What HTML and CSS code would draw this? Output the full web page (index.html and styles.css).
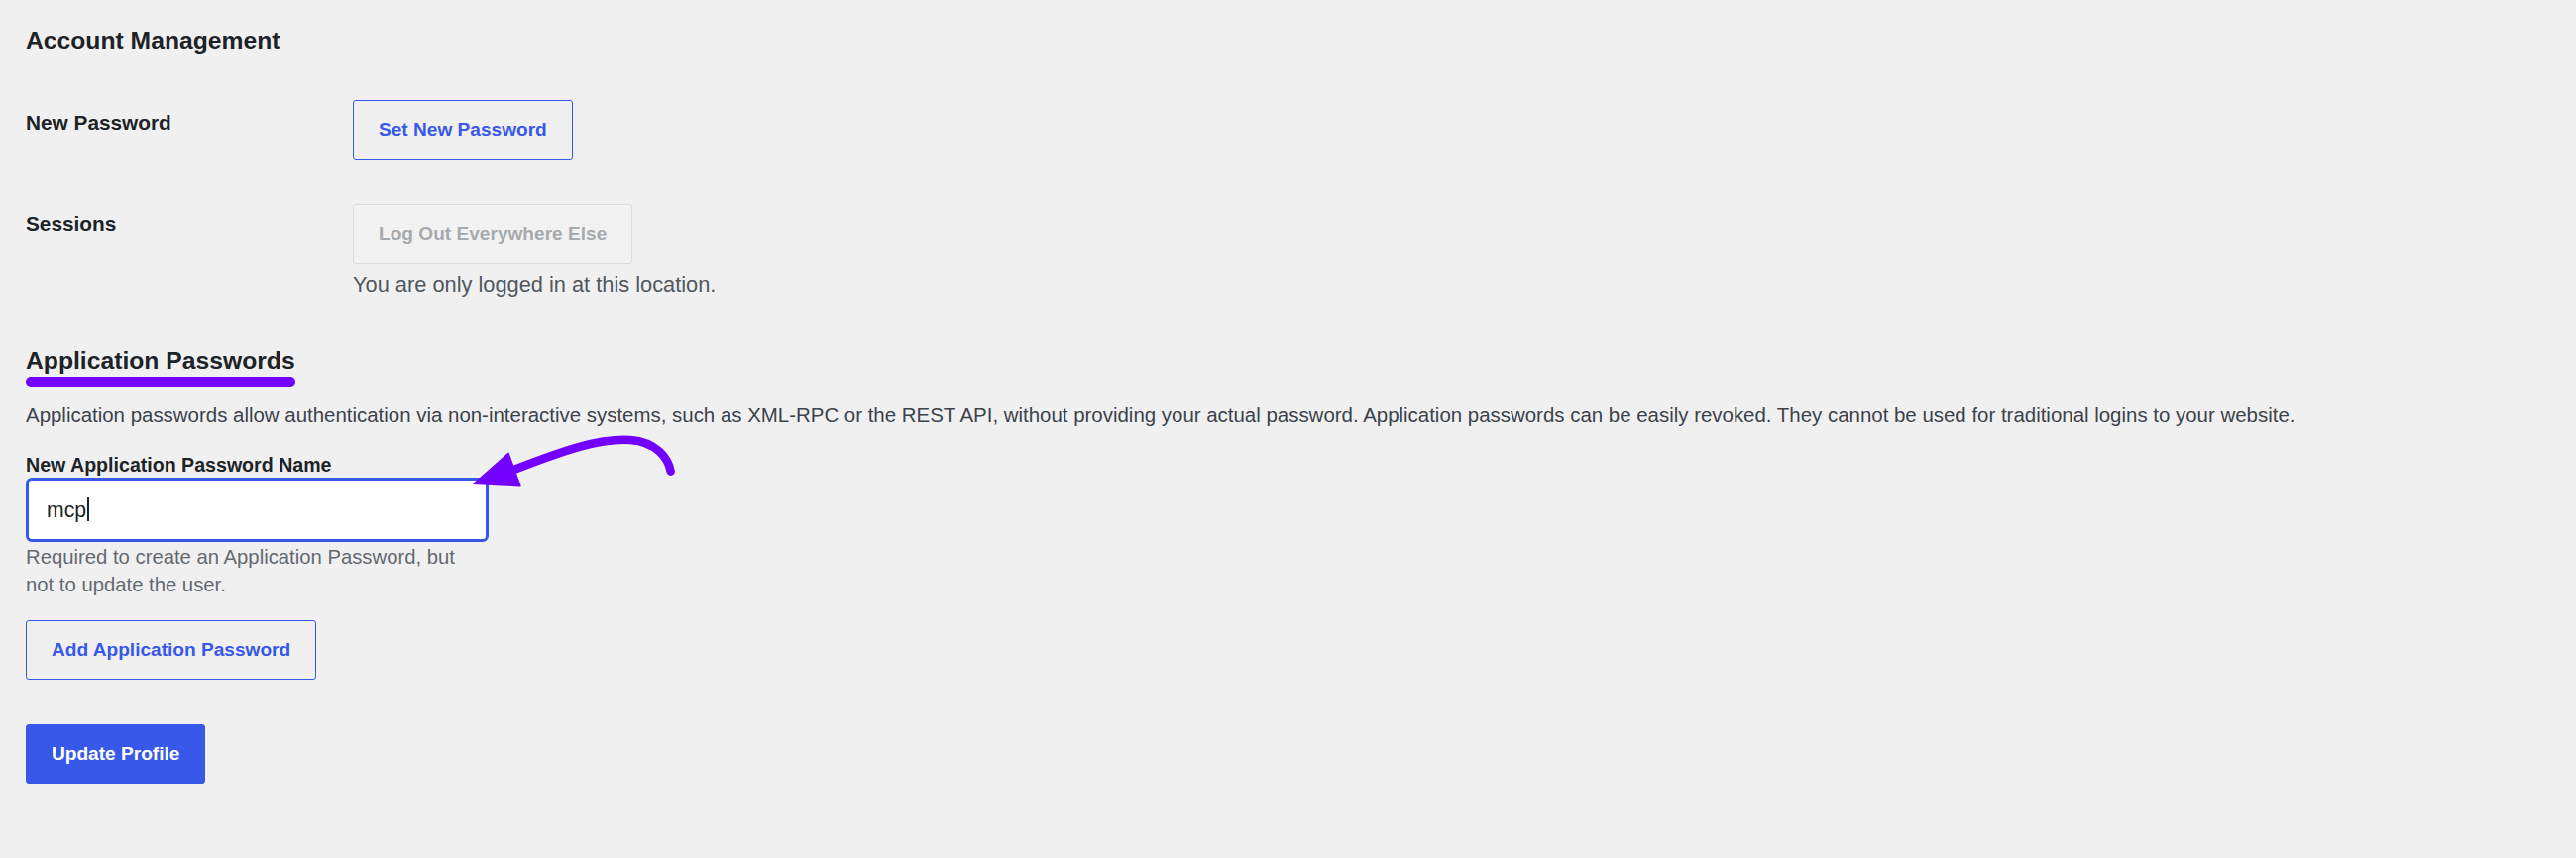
FILE: index.html
```html
<!DOCTYPE html>
<html lang="en">
<head>
<meta charset="utf-8">
<title>Profile</title>
<link rel="stylesheet" href="styles.css">
</head>
<body>
<main class="profile">
  <h2 class="section-title">Account Management</h2>

  <div class="form-table">
    <div class="form-row">
      <div class="form-label">New Password</div>
      <div class="form-field">
        <button type="button" class="btn btn-secondary">Set New Password</button>
      </div>
    </div>
    <div class="form-row form-row--stacked">
      <div class="form-label">Sessions</div>
      <div class="form-field">
        <button type="button" class="btn btn-disabled" disabled>Log Out Everywhere Else</button>
        <p class="session-note">You are only logged in at this location.</p>
      </div>
    </div>
  </div>

  <section class="app-passwords">
    <h2 class="section-title section-title--spaced"><span class="marked">Application Passwords</span></h2>
    <p class="intro">Application passwords allow authentication via non-interactive systems, such as XML-RPC or the REST API, without providing your actual password. Application passwords can be easily revoked. They cannot be used for traditional logins to your website.</p>

    <div class="field">
      <label class="field-label" for="app-name">New Application Password Name</label>
      <div class="input-wrap">
        <input class="text-input" id="app-name" type="text" value="mcp">
        <span class="input-caret" aria-hidden="true"></span>
      </div>
      <svg class="pointer-arrow" width="220" height="65" viewBox="0 0 220 65" aria-hidden="true">
        <path d="M206.7 41.7 C204 28, 192 12, 166 10 C135 8, 100 20, 46 41" fill="none" stroke="#7300ff" stroke-width="8.5" stroke-linecap="round"/>
        <polygon points="8,54.3 43,23.3 55,56.7" fill="#7300ff" stroke="#7300ff" stroke-width="1.5" stroke-linejoin="round"/>
      </svg>
      <p class="field-help">Required to create an Application Password, but not to update the user.</p>
    </div>

    <button type="button" class="btn btn-secondary btn-add">Add Application Password</button>
  </section>

  <button type="submit" class="btn btn-primary btn-submit">Update Profile</button>
</main>
</body>
</html>
```

FILE: styles.css
```css
* {
  box-sizing: border-box;
}

html,
body {
  margin: 0;
  background: #f0f0f1;
}

body {
  font-family: "Liberation Sans", Arial, sans-serif;
  color: #1d2327;
}

.profile {
  padding: 26px 26px 40px;
  display: flex;
  flex-direction: column;
  align-items: flex-start;
}

.section-title {
  margin: 0;
  font-size: 24.7px;
  line-height: 30px;
  font-weight: 700;
  color: #1d2327;
}

.section-title--spaced {
  margin-top: 47.5px;
}

/* highlighter stroke under the heading */
.marked {
  position: relative;
  display: inline-block;
}

.marked::after {
  content: "";
  position: absolute;
  left: 0;
  right: 0;
  bottom: -11.5px;
  height: 10px;
  border-radius: 5px;
  background: #7300ff;
}

.form-table {
  margin-top: 45px;
  display: flex;
  flex-direction: column;
  gap: 45px;
}

.form-row {
  display: grid;
  grid-template-columns: 330px auto;
  align-items: start;
}

.form-label {
  padding-top: 8.5px;
  font-size: 20.8px;
  line-height: 27px;
  font-weight: 700;
  color: #1d2327;
}

.form-row--stacked .form-label {
  padding-top: 6px;
}

.form-field {
  display: flex;
  flex-direction: column;
  align-items: flex-start;
}

.btn {
  height: 60px;
  padding: 0 25px;
  border: 1px solid #3858e9;
  border-radius: 3px;
  background: transparent;
  font-family: "Liberation Sans", Arial, sans-serif;
  font-size: 19.1px;
  line-height: 58px;
  font-weight: 700;
  white-space: nowrap;
  cursor: pointer;
}

.btn-secondary {
  color: #3858e9;
}

.btn-disabled {
  color: #a7aaad;
  border-color: #dcdcde;
  background: #f2f2f3;
  cursor: default;
}

.btn-primary {
  color: #ffffff;
  background: #3858e9;
}

.session-note {
  margin: 7.5px 0 0;
  font-size: 21.8px;
  line-height: 28px;
  color: #50575e;
}

.intro {
  margin: 25.5px 0 0;
  font-size: 20.45px;
  line-height: 28px;
  color: #3c434a;
}

.field {
  position: relative;
  margin-top: 23.5px;
  display: flex;
  flex-direction: column;
  align-items: flex-start;
}

.field-label {
  font-size: 19.6px;
  line-height: 26px;
  font-weight: 700;
  color: #1d2327;
}

.input-wrap {
  position: relative;
}

.text-input {
  display: block;
  width: 467px;
  height: 65px;
  margin: 0;
  padding: 0 18px;
  border: 3px solid #3858e9;
  border-radius: 6px;
  background: #ffffff;
  font-family: "Liberation Sans", Arial, sans-serif;
  font-size: 21.2px;
  color: #1d2327;
  outline: none;
}

/* text cursor sitting after the typed value */
.input-caret {
  position: absolute;
  left: 61.5px;
  top: 20px;
  width: 2px;
  height: 24px;
  background: #1d2327;
}

/* annotation arrow pointing at the name field */
.pointer-arrow {
  position: absolute;
  left: 444px;
  top: -22px;
  overflow: visible;
}

.field-help {
  width: 445px;
  margin: 1px 0 0;
  font-size: 20.3px;
  line-height: 28px;
  color: #646970;
}

.btn-add {
  margin-top: 22px;
}

.btn-submit {
  margin-top: 45px;
}
```
